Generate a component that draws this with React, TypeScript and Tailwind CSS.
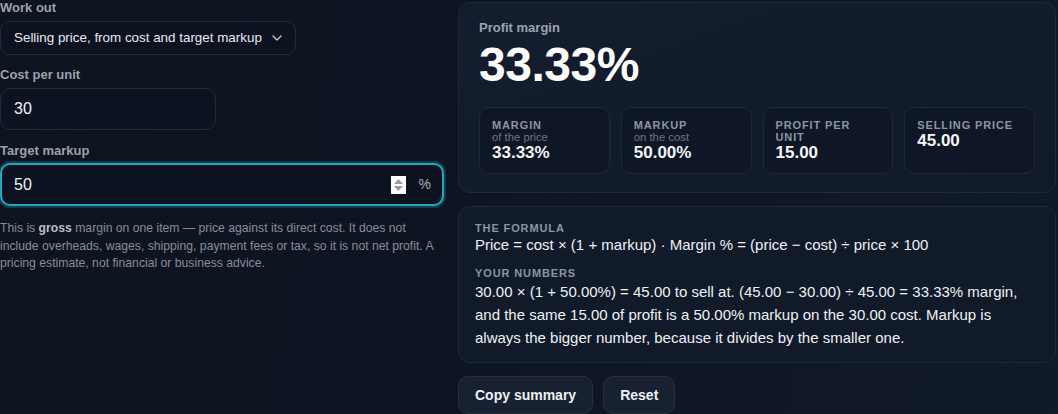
import React from "react";

const font = { fontFamily: '"Liberation Sans", Arial, sans-serif' };

function Stat({ label, sub, value }: { label: string; sub?: string; value: string }) {
  return (
    <div className="rounded-[10px] border border-[#1f2838] bg-[#0f1726] px-[12px] pt-[11px] pb-[10px]">
      <div className="text-[11px] leading-[12px] font-bold uppercase tracking-[0.08em] text-[#8b95a5]">{label}</div>
      {sub && <div className="text-[11.3px] leading-[12px] text-[#6b7585]">{sub}</div>}
      <div className="text-[17px] leading-[20px] font-bold text-[#f3f5f8]">{value}</div>
    </div>
  );
}

export default function App() {
  return (
    <div
      className="w-[1058px] h-[414px] overflow-hidden bg-[linear-gradient(100deg,#0d131f_0%,#0e1522_45%,#111a28_100%)] text-white"
      style={font}
    >
      <div className="grid grid-cols-[444px_598px] gap-[14px]">
        {/* Left column */}
        <div className="flex flex-col">
          <label className="text-[13px] leading-[16px] font-bold text-[#9aa2ae]">Work out</label>
          <div className="mt-[5px] flex h-[34px] w-[296px] items-center justify-between rounded-[9px] border border-[#222a38] bg-[#0c1220] pl-[13px] pr-[13px]">
            <span className="text-[13.4px] text-[#e8ebef]">Selling price, from cost and target markup</span>
            <svg width="10" height="6" viewBox="0 0 10 6" fill="none">
              <path d="M1 1l4 4 4-4" stroke="#c9ced6" strokeWidth="1.3" strokeLinecap="round" strokeLinejoin="round" />
            </svg>
          </div>

          <label className="mt-[12px] text-[13px] leading-[16px] font-bold text-[#9aa2ae]">Cost per unit</label>
          <div className="mt-[5px] flex h-[42px] w-[216px] items-center rounded-[10px] border border-[#222a38] bg-[#0c1220] pl-[13px]">
            <span className="text-[16px] text-[#f1f3f6]">30</span>
          </div>

          <label className="mt-[13px] text-[13px] leading-[16px] font-bold text-[#9aa2ae]">Target markup</label>
          <div className="mt-[4px] flex h-[43px] w-[444px] items-center rounded-[10px] border-2 border-[#23a7ba] bg-[#0c1220] pl-[12px] pr-[11px] shadow-[0_0_0_2px_rgba(34,160,180,0.28)]">
            <span className="flex-1 text-[16px] text-[#f1f3f6]">50</span>
            <div className="mr-[13px] flex h-[18px] w-[15px] flex-col items-center justify-center gap-[2px] bg-white">
              <svg width="9" height="5" viewBox="0 0 9 5"><path d="M4.5 0L9 5H0z" fill="#9a9a9a" /></svg>
              <svg width="9" height="5" viewBox="0 0 9 5"><path d="M0 0h9L4.5 5z" fill="#9a9a9a" /></svg>
            </div>
            <span className="text-[14px] text-[#a9b0bb]">%</span>
          </div>

          <p className="mt-[14px] text-[12.2px] leading-[17.5px] text-[#858d9a]">
            This is <b className="text-[#b8bfc9]">gross</b> margin on one item — price against its direct cost. It does not
            include overheads, wages, shipping, payment fees or tax, so it is not net profit. A pricing estimate, not
            financial or business advice.
          </p>
        </div>

        {/* Right column */}
        <div className="flex flex-col pt-[2px]">
          <div className="rounded-[12px] border border-[#1f2939] bg-[linear-gradient(160deg,#141d2e_0%,#111a2a_100%)] px-[20px] pt-[17px] pb-[18px]">
            <div className="text-[13px] leading-[16px] font-bold text-[#9aa2ae]">Profit margin</div>
            <div className="mt-[5px] text-[48px] leading-[48px] font-bold tracking-[-0.01em] text-white">33.33%</div>
            <div className="mt-[18px] grid grid-cols-4 gap-[11px]">
              <Stat label="Margin" sub="of the price" value="33.33%" />
              <Stat label="Markup" sub="on the cost" value="50.00%" />
              <Stat label="Profit per unit" value="15.00" />
              <Stat label="Selling price" value="45.00" />
            </div>
          </div>

          <div className="mt-[13px] rounded-[12px] border border-[#1f2939] bg-[#111a29] px-[16px] pt-[14px] pb-[13px]">
            <div className="text-[11px] leading-[14px] font-bold uppercase tracking-[0.08em] text-[#8b95a5]">The formula</div>
            <div className="text-[15px] leading-[20px] text-[#eef1f5]">
              Price = cost × (1 + markup) · Margin % = (price − cost) ÷ price × 100
            </div>
            <div className="mt-[11px] text-[11px] leading-[14px] font-bold uppercase tracking-[0.08em] text-[#8b95a5]">Your numbers</div>
            <div className="text-[15px] leading-[23px] text-[#eef1f5]">
              30.00 × (1 + 50.00%) = 45.00 to sell at. (45.00 − 30.00) ÷ 45.00 = 33.33% margin, and the same 15.00 of
              profit is a 50.00% markup on the 30.00 cost. Markup is always the bigger number, because it divides by the
              smaller one.
            </div>
          </div>

          <div className="mt-[13px] flex gap-[10px]">
            <button className="h-[38px] rounded-[10px] border border-[#263041] bg-[#172131] px-[16px] text-[14px] font-bold text-[#eef1f5]">
              Copy summary
            </button>
            <button className="h-[38px] rounded-[10px] border border-[#263041] bg-[#172131] px-[16px] text-[14px] font-bold text-[#eef1f5]">
              Reset
            </button>
          </div>
        </div>
      </div>
    </div>
  );
}
